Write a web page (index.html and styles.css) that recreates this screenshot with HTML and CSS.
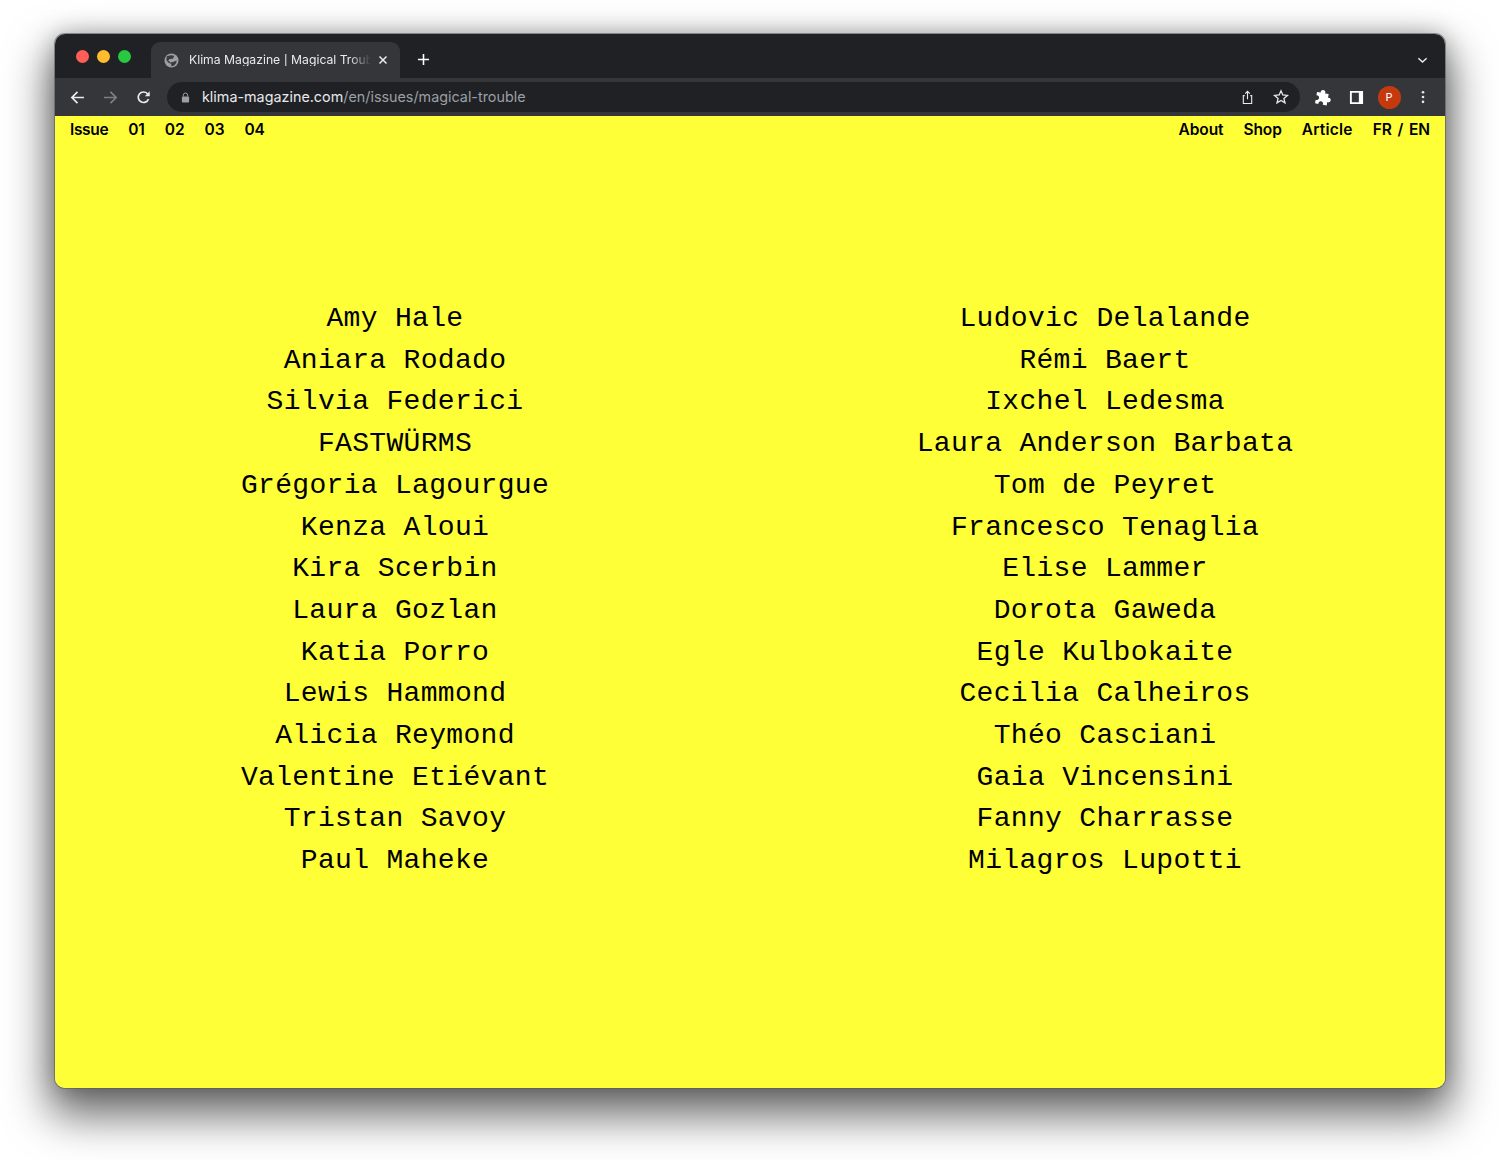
FILE: index.html
```html
<!DOCTYPE html>
<html lang="en">
<head>
<meta charset="utf-8">
<title>Klima Magazine | Magical Trouble</title>
<link rel="stylesheet" href="styles.css">
</head>
<body>
<div class="window">
  <div class="titlebar">
    <div class="lights"><i class="light red"></i><i class="light yellow"></i><i class="light green"></i></div>
    <div class="tab">
      <svg class="globe" viewBox="0 0 16 16"><circle cx="8" cy="8" r="7.5" fill="#9aa0a6"/><path d="M3 3.500 7 2.500 11 3 9.500 6 6 6.500 4.500 8 7 10 9.500 9.500 13.500 8 13 11 10.500 13.500 8 14 7.500 11.500 4.500 10 2.500 7.500Z" fill="#3a3b3f"/></svg>
      <span class="tab-title">Klima Magazine | Magical Trouble</span>
      <svg class="tab-close" viewBox="0 0 10 10"><path d="M1.500 1.500 8.500 8.500M8.500 1.500 1.500 8.500" stroke="#e8eaed" stroke-width="1.500" fill="none"/></svg>
    </div>
    <svg class="new-tab" viewBox="0 0 14 14"><path d="M7 1V13M1 7H13" stroke="#fff" stroke-width="1.700" fill="none"/></svg>
    <svg class="tab-menu" viewBox="0 0 12 8"><path d="M1.500 2 6 6.200 10.500 2" stroke="#e8eaed" stroke-width="1.600" fill="none"/></svg>
  </div>
  <div class="toolbar">
    <svg class="tool" viewBox="0 0 16 16"><path d="M15 8H2M8 2 2 8 8 14" stroke="#e8eaed" stroke-width="1.800" fill="none"/></svg>
    <svg class="tool" viewBox="0 0 16 16"><path d="M1 8H14M8 2 14 8 8 14" stroke="#7d7f83" stroke-width="1.800" fill="none"/></svg>
    <svg class="tool" viewBox="0 0 16 16"><path d="M13.300 9.500A5.600 5.600 0 1 1 12.200 4L14 5.800" stroke="#e8eaed" stroke-width="1.800" fill="none"/><path d="M14.600 1.400V6.600H9.400Z" fill="#e8eaed"/></svg>
    <div class="omnibox">
      <svg class="lock" viewBox="0 0 10 12"><path d="M2.600 5V3.400a2.400 2.400 0 0 1 4.800 0V5" stroke="#9aa0a6" stroke-width="1.100" fill="none"/><rect x="1" y="5" width="8" height="6.500" rx="1" fill="#9aa0a6"/></svg>
      <span class="url">klima-magazine.com<span class="url-path">/en/issues/magical-trouble</span></span>
      <svg class="share" viewBox="0 0 14 16"><path d="M4 6H2.500V14.500H11.500V6H10M7 10V1.500M4.500 3.800 7 1.300 9.500 3.800" stroke="#e8eaed" stroke-width="1.200" fill="none"/></svg>
      <svg class="star" viewBox="0 0 16 16"><path d="M8 1.800 9.800 6 14.400 6.400 10.900 9.400 12 13.900 8 11.500 4 13.900 5.100 9.400 1.600 6.400 6.200 6Z" stroke="#e8eaed" stroke-width="1.300" fill="none"/></svg>
    </div>
    <svg class="puzzle" viewBox="0 0 16 16"><path d="M2 4.500H5.300A2.100 2.100 0 1 1 9.300 4.500H12.500V7.800A2.100 2.100 0 1 1 12.500 11.800V14.800H9A2.100 2.100 0 1 0 5 14.800H2V11.500A2.100 2.100 0 1 0 2 7.500Z" fill="#fff" transform="rotate(10 8 8)"/></svg>
    <svg class="panel" viewBox="0 0 16 16"><path d="M1 1H15V15H1ZM3 3V13H10.500V3Z" fill="#fff" fill-rule="evenodd"/></svg>
    <div class="avatar">P</div>
    <svg class="kebab" viewBox="0 0 4 16"><circle cx="2" cy="2.500" r="1.500" fill="#e8eaed"/><circle cx="2" cy="8" r="1.500" fill="#e8eaed"/><circle cx="2" cy="13.500" r="1.500" fill="#e8eaed"/></svg>
  </div>
  <main class="page">
    <nav class="site-nav">
      <div class="nav-group"><a class="nav-label">Issue</a><a>01</a><a>02</a><a>03</a><a>04</a></div>
      <div class="nav-group"><a>About</a><a>Shop</a><a class="nav-wide">Article</a><a>FR / EN</a></div>
    </nav>
    <section class="names">
      <ul class="col">
        <li>Amy Hale</li><li>Aniara Rodado</li><li>Silvia Federici</li><li>FASTWÜRMS</li><li>Grégoria Lagourgue</li><li>Kenza Aloui</li><li>Kira Scerbin</li><li>Laura Gozlan</li><li>Katia Porro</li><li>Lewis Hammond</li><li>Alicia Reymond</li><li>Valentine Etiévant</li><li>Tristan Savoy</li><li>Paul Maheke</li>
      </ul>
      <ul class="col">
        <li>Ludovic Delalande</li><li>Rémi Baert</li><li>Ixchel Ledesma</li><li>Laura Anderson Barbata</li><li>Tom de Peyret</li><li>Francesco Tenaglia</li><li>Elise Lammer</li><li>Dorota Gaweda</li><li>Egle Kulbokaite</li><li>Cecilia Calheiros</li><li>Théo Casciani</li><li>Gaia Vincensini</li><li>Fanny Charrasse</li><li>Milagros Lupotti</li>
      </ul>
    </section>
  </main>
</div>
</body>
</html>
```
FILE: styles.css
```css
* { box-sizing: border-box; }
html, body { margin: 0; height: 100%; background: #fff; overflow: hidden; }
body { padding: 34px 55px 72px; }
.window {
  height: 1054px;
  border-radius: 10px;
  overflow: hidden;
  display: flex;
  flex-direction: column;
  box-shadow: 0 0 0 1px rgba(90,90,90,.6), 0 22px 44px 6px rgba(0,0,0,.58), 0 0 22px rgba(0,0,0,.25);
}
.titlebar {
  height: 44px;
  background: #202124;
  display: flex;
  align-items: flex-end;
  flex: none;
}
.lights { display: flex; gap: 8px; padding: 0 0 15px 21px; width: 96px; }
.light { width: 13px; height: 13px; border-radius: 50%; display: block; flex: none; }
.red { background: #ff5f57; }
.yellow { background: #febc2e; }
.green { background: #28c840; }
.tab {
  width: 249px;
  height: 36px;
  background: #35363a;
  border-radius: 9px 9px 0 0;
  display: flex;
  align-items: center;
  padding: 0 12px 0 13px;
  color: #e8eaed;
  font: 12.200px/1 Inter, "Liberation Sans", sans-serif;
}
.globe { width: 15px; height: 15px; flex: none; margin-right: 10px; }
.tab-title { flex: 1; overflow: hidden; white-space: nowrap; min-width: 0; -webkit-mask-image: linear-gradient(90deg, #000 88%, transparent); mask-image: linear-gradient(90deg, #000 88%, transparent); }
.tab-close { width: 10px; height: 10px; flex: none; margin-left: 7px; }
.new-tab { width: 13px; height: 13px; margin: 0 0 12px 17px; flex: none; }
.tab-menu { width: 11px; height: 8px; margin: 0 17px 14px auto; flex: none; }
.toolbar {
  height: 38px;
  background: #35363a;
  display: flex;
  align-items: center;
  flex: none;
  padding-left: 15px;
}
.tool { width: 15px; height: 15px; margin-right: 18px; flex: none; }
.omnibox {
  width: 1133px;
  height: 30px;
  margin-left: -2px;
  background: #202124;
  border-radius: 15px;
  display: flex;
  align-items: center;
  padding: 0 11px 0 14px;
  flex: none;
}
.lock { width: 9px; height: 11px; flex: none; margin-right: 12px; }
.url { color: #e8eaed; font: 14.350px/1 Inter, "Liberation Sans", sans-serif; flex: 1; white-space: nowrap; }
.url-path { color: #9aa0a6; }
.share { width: 13px; height: 15px; margin-right: 19px; flex: none; }
.star { width: 16px; height: 16px; flex: none; }
.puzzle { width: 18px; height: 18px; margin-left: 14px; flex: none; }
.panel { width: 15px; height: 15px; margin-left: 16.500px; flex: none; }
.avatar {
  width: 23px; height: 23px; border-radius: 50%;
  background: #c5390f; color: #fff;
  font: 11px/23px Inter, "Liberation Sans", sans-serif;
  text-align: center; margin-left: 14px; flex: none;
}
.kebab { width: 4px; height: 14px; margin-left: 20.500px; flex: none; }
.page {
  flex: 1;
  background: #ffff38;
  color: #000;
  display: flex;
  flex-direction: column;
}
.site-nav {
  display: flex;
  justify-content: space-between;
  padding: 5px 15px 0;
  font: 600 15.500px/18px Inter, "Liberation Sans", sans-serif;
  letter-spacing: -.1px;
  word-spacing: 2px;
}
.nav-group { display: flex; gap: 20px; }
.nav-label { letter-spacing: -.35px; }
.nav-wide { letter-spacing: .2px; }
.names {
  display: flex;
  justify-content: center;
  gap: 290px;
  padding-top: 159px;
}
.col {
  width: 420px;
  margin: 0;
  padding: 0;
  list-style: none;
  text-align: center;
  font: 28px/41.700px "Liberation Mono", monospace;
  letter-spacing: .32px;
}
```
